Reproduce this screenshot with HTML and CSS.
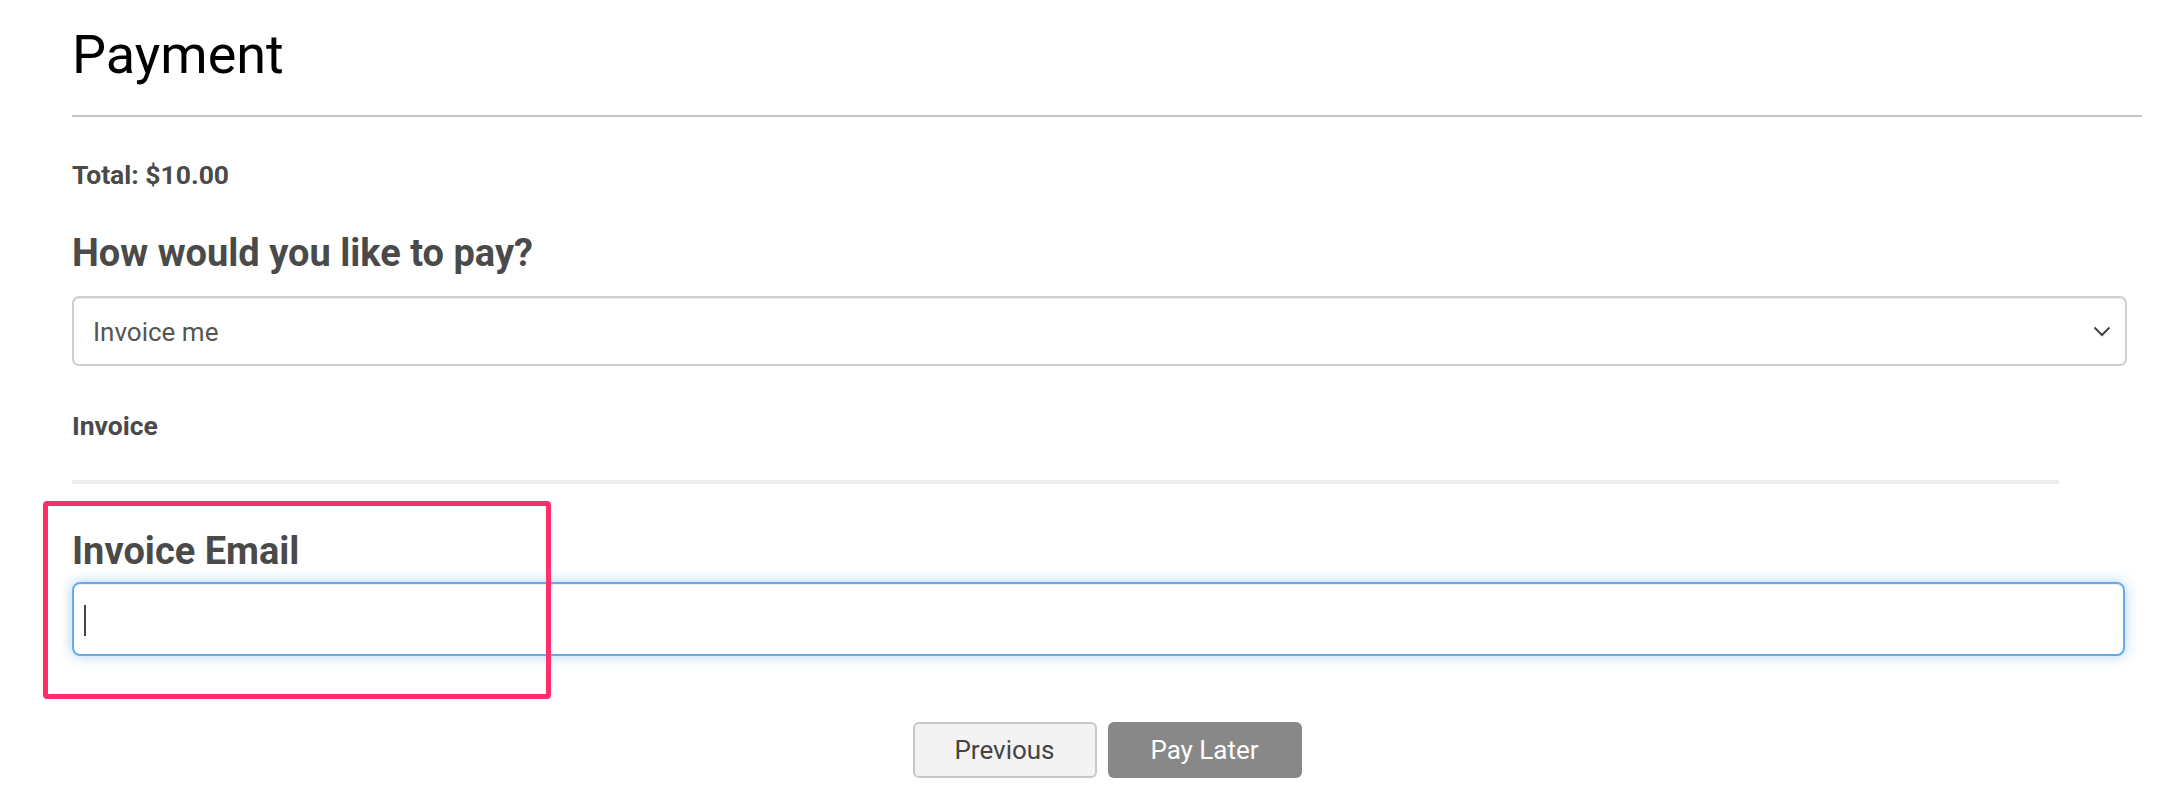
FILE: index.html
```html
<!DOCTYPE html>
<html lang="en">
<head>
<meta charset="utf-8">
<title>Payment</title>
<link rel="stylesheet" href="styles.css">
</head>
<body>
<main class="page">
  <h1 class="title">Payment</h1>
  <hr class="rule">
  <p class="total">Total: $10.00</p>
  <h2 class="question">How would you like to pay?</h2>
  <div class="select">
    <span class="select-text">Invoice me</span>
    <svg class="chevron" width="18" height="11" viewBox="0 0 18 11" aria-hidden="true"><path d="M1.5 1.5 L9 9 L16.5 1.5" fill="none" stroke="#444" stroke-width="2"/></svg>
  </div>
  <p class="label">Invoice</p>
  <div class="separator"></div>
  <h2 class="question email-heading">Invoice Email</h2>
  <div class="input"><span class="caret"></span></div>
  <div class="actions">
    <button class="btn btn-prev" type="button">Previous</button>
    <button class="btn btn-pay" type="button">Pay Later</button>
  </div>
  <div class="highlight"></div>
</main>
</body>
</html>
```
FILE: styles.css
```css
* { box-sizing: border-box; }
html, body { margin: 0; padding: 0; background: #fff; }
body { font-family: Roboto, "Liberation Sans", Arial, sans-serif; }
.page {
  position: relative;
  padding: 23px 32px 40px 72px;
  display: flex;
  flex-direction: column;
}
.title {
  margin: 0;
  font-size: 54px;
  line-height: 63px;
  font-weight: 400;
  color: #000;
}
.rule {
  margin: 29px 0 0 0;
  border: 0;
  border-top: 2px solid #c2c2c2;
  height: 0;
}
.total, .label {
  margin: 0;
  font-size: 26.5px;
  line-height: 30px;
  font-weight: 700;
  color: #4a4a4a;
}
.total { margin-top: 43px; }
.question {
  margin: 41px 0 0 0;
  font-size: 38px;
  line-height: 45px;
  font-weight: 700;
  color: #4a4a4a;
}
.select {
  margin: 20px 15px 0 0;
  height: 70px;
  border: 2px solid #cfcfcf;
  border-radius: 7px;
  box-shadow: inset 0 1px 1px rgba(0,0,0,.075);
  display: flex;
  align-items: center;
  justify-content: space-between;
  padding: 0 14px 0 19px;
}
.select-text {
  font-size: 26px;
  color: #555;
  line-height: 30px;
  padding-top: 1px;
}
.chevron { display: block; margin-top: 1px; }
.label { margin-top: 45px; }
.separator {
  margin: 39px 83px 0 0;
  height: 4px;
  background: #ececec;
}
.email-heading { margin-top: 45px; }
.input {
  margin: 8px 17px 0 0;
  height: 74px;
  border: 2px solid #66abe8;
  border-radius: 8px;
  box-shadow: inset 0 1px 1px rgba(0,0,0,.075), 0 0 14px rgba(102,175,233,.55);
  display: flex;
  align-items: center;
  padding-left: 10px;
}
.caret {
  width: 2px;
  height: 31px;
  background: #444;
  margin-top: 2px;
}
.actions {
  margin-top: 66px;
  display: flex;
  justify-content: center;
  gap: 11px;
}
.btn {
  height: 56px;
  border-radius: 6px;
  font-family: Roboto, "Liberation Sans", Arial, sans-serif;
  font-size: 26px;
  font-weight: 400;
  padding: 0;
  cursor: pointer;
}
.btn-prev {
  width: 184px;
  background: #f3f3f3;
  border: 2px solid #c8c8c8;
  color: #444;
}
.btn-pay {
  width: 194px;
  background: #888;
  border: 0;
  color: #fff;
}
.highlight {
  position: absolute;
  left: 43px;
  top: 501px;
  width: 508px;
  height: 198px;
  border: 5px solid #ff2f6d;
  border-radius: 4px;
  pointer-events: none;
}
```
